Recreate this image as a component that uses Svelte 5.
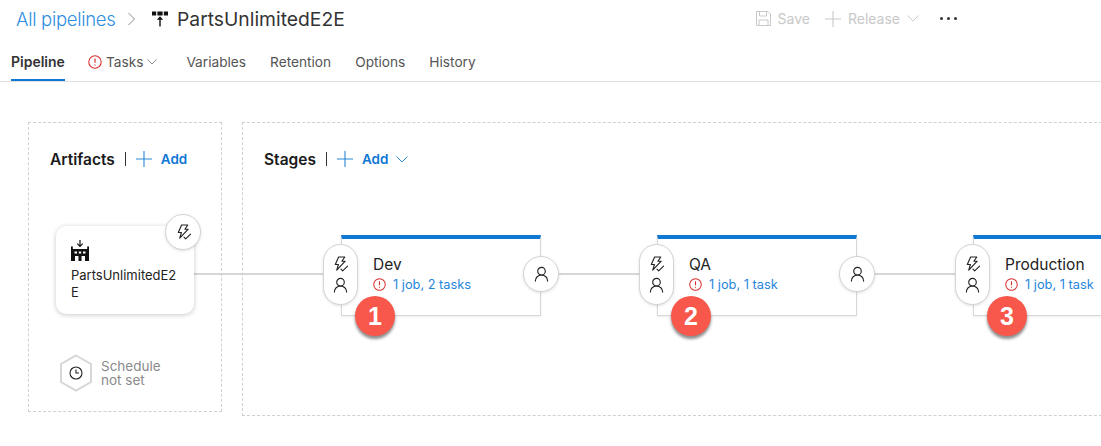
<script>
	const tabs = ['Variables', 'Retention', 'Options', 'History'];
	const stages = [
		{ name: 'Dev', summary: '1 job, 2 tasks', step: 1 },
		{ name: 'QA', summary: '1 job, 1 task', step: 2 },
		{ name: 'Production', summary: '1 job, 1 task', step: 3 }
	];
</script>

{#snippet bolt()}
	<svg class="ic" viewBox="0 0 18 18" width="17" height="17" fill="none" stroke="#222" stroke-width="1.2" stroke-linejoin="round" stroke-linecap="round">
		<path d="M7 1h6.500l-3 4.500h3.500L5 15l1.800-6H3.500z" />
		<path d="M9.500 14l1.800 1.800 5.200-5" />
	</svg>
{/snippet}

{#snippet person()}
	<svg class="ic" viewBox="0 0 18 18" width="17" height="17" fill="none" stroke="#222" stroke-width="1.2" stroke-linecap="round">
		<circle cx="9" cy="5.500" r="4" />
		<path d="M2.500 16c0-3.600 2.800-6.500 6.500-6.500s6.500 2.900 6.500 6.500" />
	</svg>
{/snippet}

{#snippet warn(size)}
	<svg viewBox="0 0 14 14" width={size} height={size} fill="none" stroke="#d9302c" stroke-width="1.1">
		<circle cx="7" cy="7" r="6.200" />
		<path d="M7 3.400v4.400M7 9.400v1.200" stroke-width="1.200" />
	</svg>
{/snippet}

{#snippet plus(size, color)}
	<svg viewBox="0 0 16 16" width={size} height={size} fill="none" stroke={color} stroke-width="1.1">
		<path d="M8 0v16M0 8h16" />
	</svg>
{/snippet}

{#snippet chevron(width, color)}
	<svg viewBox="0 0 12 7" {width} height={width * 0.58} fill="none" stroke={color} stroke-width="1">
		<path d="M.5.5 6 6 11.500.5" />
	</svg>
{/snippet}

<div class="page">
	<header class="topbar">
		<a class="crumb">All pipelines</a>
		<svg class="sep" viewBox="0 0 7 14" width="7" height="14" fill="none" stroke="#8a8a8a" stroke-width="1"><path d="M.5 1l6 6-6 6" /></svg>
		<svg class="pipe-icon" viewBox="0 0 16 16" width="16" height="16" fill="#111">
			<path d="M0 .5h4.200v4H0zM5.400 .5h5.200v4H5.400zM11.800 .5H16v4h-4.200z" />
			<path d="M7.300 15.500V8.800H4.800L8 5.300l3.200 3.500H8.700v6.700z" />
		</svg>
		<h1>PartsUnlimitedE2E</h1>
		<div class="actions">
			<span class="action save">
				<svg viewBox="0 0 15 15" width="15" height="15" fill="none" stroke="#c8c8c8" stroke-width="1"><path d="M.5.5h11.500l2.500 2.500v11.500H.5zM3.500.5v4.500h7V.5M3 14.500V9h9v5.500" /></svg>
				Save
			</span>
			<span class="action release">
				{@render plus(16, '#c8c8c8')}
				Release
				{@render chevron(12, '#c8c8c8')}
			</span>
			<span class="more"><i></i><i></i><i></i></span>
		</div>
	</header>

	<nav class="tabs">
		<span class="tab active">Pipeline</span>
		<span class="tab tasks">
			{@render warn(14)}
			Tasks
			{@render chevron(10, '#777')}
		</span>
		{#each tabs as tab}
			<span class="tab">{tab}</span>
		{/each}
	</nav>

	<main class="canvas">
		<section class="artifacts">
			<div class="section-head">
				<h2>Artifacts</h2>
				<span class="bar"></span>
				<span class="add">{@render plus(16, '#2b88d8')} Add</span>
			</div>
			<div class="artifact">
				<svg viewBox="0 0 18 21" width="18" height="21" fill="#111">
					<path d="M8.400 0h1.200v5l1.700-1.700.8.800L9 7.300 5.900 4.100l.8-.8 1.700 1.700z" />
					<path fill-rule="evenodd" d="M0 6.500h1.800V9h14.400V6.500H18V21H0zM3.500 11.500v2h2.500v-2zm4.300 0v2h2.400v-2zm4.200 0v2h2.500v-2zM4 16v5h3.500v-5zm6.500 0v5H14v-5z" />
				</svg>
				<div class="artifact-name">PartsUnlimitedE2E</div>
				<span class="trigger">{@render bolt()}</span>
				<span class="link"></span>
			</div>
			<div class="schedule">
				<svg viewBox="0 0 34 38" width="34" height="38">
					<path d="M17 1.500 32 10v18l-15 8.500L2 28V10z" fill="#fff" stroke="#d6d6d6" stroke-width="2" />
					<circle cx="17" cy="19" r="6" fill="none" stroke="#222" stroke-width="1.100" />
					<path d="M17 15.500V19h3" fill="none" stroke="#222" stroke-width="1.100" />
				</svg>
				<span>Schedule<br />not set</span>
			</div>
		</section>

		<section class="stages">
			<div class="section-head">
				<h2>Stages</h2>
				<span class="bar"></span>
				<span class="add">{@render plus(16, '#2b88d8')} Add</span>
				<span class="add-chevron">{@render chevron(12, '#2b88d8')}</span>
			</div>
			<div class="stage-row">
				{#each stages as stage}
					<div class="stage">
						<span class="pill">{@render bolt()}{@render person()}</span>
						<div class="stage-name">{stage.name}</div>
						<div class="stage-summary">
							{@render warn(13)}
							<span>{stage.summary}</span>
						</div>
						<span class="post">{@render person()}</span>
						<span class="badge">{stage.step}</span>
					</div>
				{/each}
			</div>
		</section>
	</main>
</div>

<style>
	:global(body) {
		margin: 0;
		background: #fff;
	}

	.page {
		width: 1101px;
		height: 446px;
		overflow: hidden;
		font-family: Inter, "Liberation Sans", sans-serif;
		color: #222;
	}

	.topbar {
		display: flex;
		align-items: center;
		height: 37px;
		padding-left: 16px;
	}

	.crumb {
		font-size: 18.500px;
		font-weight: 300;
		letter-spacing: -0.3px;
		color: #2f8fe0;
		width: 100px;
		white-space: nowrap;
	}

	.sep {
		margin: 0 0 0 12px;
	}

	.pipe-icon {
		margin-left: 17px;
	}

	h1 {
		margin: 0 0 0 9px;
		font-size: 19.300px;
		font-weight: 400;
		color: #333;
	}

	.actions {
		display: flex;
		align-items: center;
		margin-left: auto;
		padding-right: 144px;
		font-size: 14px;
		color: #c8c8c8;
	}

	.action {
		display: flex;
		align-items: center;
		gap: 7px;
	}

	.release {
		margin-left: 15px;
	}

	.more {
		display: flex;
		gap: 4px;
		margin-left: 21px;
	}

	.more i {
		width: 3px;
		height: 3px;
		border-radius: 50%;
		background: #333;
	}

	.tabs {
		display: flex;
		align-items: stretch;
		height: 44px;
		padding-left: 11px;
		border-bottom: 1px solid #e0e0e0;
	}

	.tab {
		display: flex;
		align-items: center;
		gap: 4px;
		margin-right: 24px;
		padding-top: 7px;
		font-size: 13.700px;
		color: #555;
		box-sizing: border-box;
		border-bottom: 2px solid transparent;
	}

	.tab.active {
		font-size: 14px;
		font-weight: 600;
		color: #333;
		border-bottom-color: #0f78d4;
	}

	.tab.tasks {
		margin-right: 29px;
		margin-left: -1px;
	}

	.canvas {
		display: flex;
		gap: 20px;
		padding: 40px 0 0 28px;
	}

	.artifacts,
	.stages {
		position: relative;
		box-sizing: border-box;
		border: 1px dashed #d0d0d0;
		height: 290px;
	}

	.artifacts {
		flex: 0 0 194px;
		padding: 0 27px;
	}

	.stages {
		flex: 0 0 auto;
		width: 900px;
		height: 294px;
		padding: 0 21px;
		border-right: none;
	}

	.section-head {
		display: flex;
		align-items: center;
		height: 20px;
		margin-top: 26px;
		font-size: 14px;
	}

	.artifacts .section-head {
		margin-left: -6px;
		margin-right: -20px;
	}

	h2 {
		margin: 0;
		font-size: 15.500px;
		font-weight: 600;
		color: #1a1a1a;
	}

	.bar {
		width: 1px;
		height: 14px;
		margin: 0 10px;
		background: #333;
	}

	.add {
		display: flex;
		align-items: center;
		gap: 9px;
		font-weight: 600;
		font-size: 13.500px;
		color: #0f78d4;
	}

	.add-chevron {
		display: flex;
		margin-left: 8px;
	}

	.artifact {
		position: relative;
		box-sizing: border-box;
		width: 138px;
		height: 88px;
		margin-top: 57px;
		padding: 14px 15px 0;
		border-radius: 10px;
		background: #fff;
		box-shadow: 0 1px 5px rgba(0, 0, 0, 0.22);
	}

	.artifact svg {
		display: block;
	}

	.artifact-name {
		margin-top: 6px;
		font-size: 13px;
		line-height: 17px;
		color: #222;
		word-break: break-all;
	}

	.trigger,
	.post {
		position: absolute;
		display: flex;
		align-items: center;
		justify-content: center;
		box-sizing: border-box;
		width: 36px;
		height: 36px;
		border-radius: 50%;
		background: #fff;
		border: 1px solid #d4d4d4;
		box-shadow: 0 1px 3px rgba(0, 0, 0, 0.12);
	}

	.trigger {
		top: -12px;
		right: -7px;
	}

	.link {
		position: absolute;
		top: 47px;
		left: 138px;
		width: 131px;
		height: 2px;
		background: #d6d6d6;
		z-index: -1;
	}

	.schedule {
		display: flex;
		align-items: center;
		gap: 8px;
		margin: 40px 0 0 3px;
		font-size: 13.500px;
		line-height: 14px;
		color: #8a8a8a;
	}

	.stage-row {
		display: flex;
		gap: 116px;
		margin: 66px 0 0 77px;
	}

	.stage {
		position: relative;
		flex: 0 0 200px;
		box-sizing: border-box;
		height: 81px;
		padding: 17px 0 0 31px;
		background: #fff;
		border: 1px solid #d8d8d8;
		border-top: 4px solid #0f78d4;
		box-shadow: 0 1px 2px rgba(0, 0, 0, 0.08);
	}

	/* connector into the next stage */
	.stage::after {
		content: '';
		position: absolute;
		top: 34px;
		left: 199px;
		width: 116px;
		height: 2px;
		background: #d6d6d6;
		z-index: -1;
	}

	.stage-name {
		font-size: 15.500px;
		line-height: 18px;
		color: #222;
	}

	.stage-summary {
		display: flex;
		align-items: center;
		gap: 7px;
		margin-top: 3px;
		font-size: 12.800px;
		color: #1f86dc;
	}

	.pill {
		position: absolute;
		top: 5px;
		left: -19px;
		display: flex;
		flex-direction: column;
		align-items: center;
		justify-content: center;
		gap: 4px;
		box-sizing: border-box;
		width: 35px;
		height: 61px;
		border-radius: 18px;
		background: #fff;
		border: 1px solid #d4d4d4;
		box-shadow: 0 1px 3px rgba(0, 0, 0, 0.12);
	}

	.post {
		top: 17px;
		right: -19px;
	}

	.ic {
		display: block;
	}

	.badge {
		position: absolute;
		top: 57px;
		left: 13px;
		display: flex;
		align-items: center;
		justify-content: center;
		width: 40px;
		height: 40px;
		border-radius: 50%;
		background: #f8574c;
		color: #fff;
		font-family: "Liberation Sans", sans-serif;
		font-size: 25px;
		font-weight: 700;
		box-shadow: 0 3px 3px rgba(0, 0, 0, 0.45);
		z-index: 2;
	}
</style>
